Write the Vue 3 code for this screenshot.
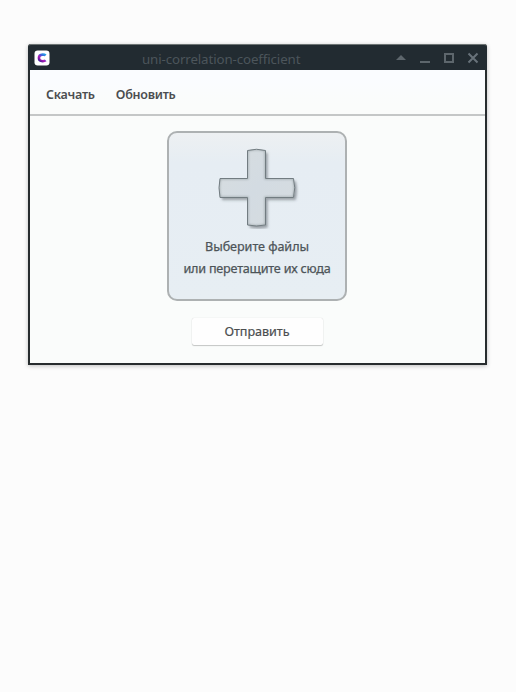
<script setup>
const menu = [
  { label: 'Скачать', name: 'download' },
  { label: 'Обновить', name: 'refresh' },
]
</script>

<template>
  <main class="page">
    <section class="window">
      <header class="titlebar">
        <svg class="logo" viewBox="0 0 16 16">
          <defs>
            <linearGradient id="logo-fill" x1="1" y1="0" x2="0.1" y2="1">
              <stop offset="0" stop-color="#1fa3e6" />
              <stop offset="0.4" stop-color="#4a55d8" />
              <stop offset="0.65" stop-color="#b01cb4" />
              <stop offset="1" stop-color="#4a1a9c" />
            </linearGradient>
          </defs>
          <rect x="0.5" y="0.5" width="15" height="15" rx="3.2" fill="#fff" />
          <path d="M11.7 5.4Q10.8 4.6 8.7 4.6Q4.9 4.9 4.9 8T8.7 11.2Q10.8 11.2 11.7 10.4" fill="none" stroke="url(#logo-fill)" stroke-width="2.5" />
        </svg>
        <h1 class="title">uni-correlation-coefficient</h1>
        <div class="controls">
          <svg viewBox="0 0 12 12"><path d="M1 8 6 3l5 5z" fill="#5d666c" /></svg>
          <svg viewBox="0 0 12 12"><path d="M1 10h10" stroke="#5d666c" stroke-width="2" /></svg>
          <svg viewBox="0 0 12 12"><path d="M2 2h8v8H2z" fill="none" stroke="#5d666c" stroke-width="2" /></svg>
          <svg viewBox="0 0 12 12"><path d="M1.5 1.5l9 9M10.5 1.5l-9 9" stroke="#68727a" stroke-width="2" /></svg>
        </div>
      </header>
      <nav class="menu">
        <span v-for="item in menu" :key="item.name" :class="['menu-item', item.name]">{{ item.label }}</span>
      </nav>
      <div class="content">
        <div class="dropzone">
          <svg class="plus" viewBox="0 0 84 84">
            <defs>
              <linearGradient id="plus-fill" x1="0" y1="0" x2="1" y2="1">
                <stop offset="0" stop-color="#d7dddf" />
                <stop offset="0.5" stop-color="#d3dbe2" />
                <stop offset="1" stop-color="#d6dcdf" />
              </linearGradient>
              <filter id="plus-shadow" x="-10%" y="-10%" width="125%" height="125%">
                <feDropShadow dx="2.2" dy="2.6" stdDeviation="1.2" flood-color="#4d575c" flood-opacity="0.5" />
              </filter>
              <filter id="inner-soft"><feGaussianBlur stdDeviation="1.2" /></filter>
              <clipPath id="plus-clip">
                <path d="M32.5 5.5Q41.5 3 50.5 5.5V33.5H78.5Q81 42.5 78.5 52.5H50.5V80Q41.5 82 32.5 80V52.5H5Q3 42.5 5 33.5H32.5Z" />
              </clipPath>
            </defs>
            <path d="M32.5 5.5Q41.5 3 50.5 5.5V33.5H78.5Q81 42.5 78.5 52.5H50.5V80Q41.5 82 32.5 80V52.5H5Q3 42.5 5 33.5H32.5Z" fill="url(#plus-fill)" filter="url(#plus-shadow)" />
            <g clip-path="url(#plus-clip)">
              <path d="M32.5 5.5Q41.5 3 50.5 5.5V33.5H78.5Q81 42.5 78.5 52.5H50.5V80Q41.5 82 32.5 80V52.5H5Q3 42.5 5 33.5H32.5Z" fill="none" stroke="#a4adb1" stroke-width="2" filter="url(#inner-soft)" />
            </g>
            <path d="M32.5 5.5Q41.5 3 50.5 5.5V33.5H78.5Q81 42.5 78.5 52.5H50.5V80Q41.5 82 32.5 80V52.5H5Q3 42.5 5 33.5H32.5Z" fill="none" stroke="#727c81" stroke-width="1" />
          </svg>
          <p class="hint first">Выберите файлы</p>
          <p class="hint second">или перетащите их сюда</p>
        </div>
        <button class="send" type="button">Отправить</button>
      </div>
    </section>
  </main>
</template>

<style>
body {
  background: #fcfcfc;
}
</style>

<style scoped>
.page {
  box-sizing: border-box;
  height: 692px;
  padding: 44px 29px 0 28px;
  font-family: "Noto Sans", sans-serif;
}
.window {
  box-sizing: border-box;
  display: flex;
  flex-direction: column;
  height: 321px;
  border: 2px solid #272c2e;
  border-top-width: 0;
  border-radius: 3px 3px 0 0;
  background: linear-gradient(#fafcff 34px, #fafcfb 60px);
  box-shadow: 0 1px 4px rgba(0, 0, 0, 0.25);
}
.titlebar {
  box-sizing: border-box;
  display: grid;
  grid-template-columns: 85px 1fr 85px;
  align-items: center;
  height: 26px;
  margin: 0 -2px;
  padding: 1px 7px 0 6px;
  border-top: 1px solid #6d7474;
  border-radius: 3px 3px 0 0;
  background: #222b31;
}
.logo {
  width: 16px;
  height: 16px;
}
.title {
  margin: 2px 0 0 23px;
  font-size: 13.3px;
  font-weight: 400;
  letter-spacing: -0.11px;
  line-height: 18px;
  white-space: nowrap;
  color: #4c555b;
}
.controls {
  display: flex;
  gap: 12px;
}
.controls svg {
  flex: none;
  width: 12px;
  height: 12px;
}
.menu {
  box-sizing: border-box;
  display: flex;
  align-items: center;
  gap: 21px;
  height: 46px;
  padding: 5px 0 0 16px;
  border-bottom: 2px solid #c4c7c7;
  font-size: 12.5px;
  font-weight: 600;
  letter-spacing: -0.25px;
  line-height: 18px;
  color: #4b4e50;
}
.content {
  display: flex;
  flex-direction: column;
  align-items: center;
  padding: 15px 1px 0 0;
}
.dropzone {
  box-sizing: border-box;
  display: flex;
  flex-direction: column;
  align-items: center;
  width: 180px;
  height: 170px;
  border: 2px solid #adb1b2;
  border-radius: 10px;
  background: linear-gradient(#edf0f2, #e6edf3 18%, #e7eef3);
}
.plus {
  width: 84px;
  height: 84px;
  margin-top: 12px;
}
.hint {
  margin: 0;
  font-size: 12.6px;
  font-weight: 400;
  line-height: 22px;
  white-space: nowrap;
  color: #4d5458;
  -webkit-text-stroke: 0.25px currentColor;
}
.first {
  margin-top: 7px;
  letter-spacing: -0.05px;
}
.second {
  letter-spacing: -0.2px;
}
.send {
  width: 131px;
  height: 27px;
  margin: 17px 0 0;
  padding: 0;
  border: 0;
  border-radius: 2px;
  background: #fefefe;
  box-shadow: 0 1px 1px rgba(0, 0, 0, 0.2), 0 0 1px rgba(0, 0, 0, 0.2);
  font-family: inherit;
  font-size: 12.6px;
  font-weight: 400;
  letter-spacing: -0.05px;
  color: #4b4e50;
  -webkit-text-stroke: 0.2px currentColor;
}
</style>
